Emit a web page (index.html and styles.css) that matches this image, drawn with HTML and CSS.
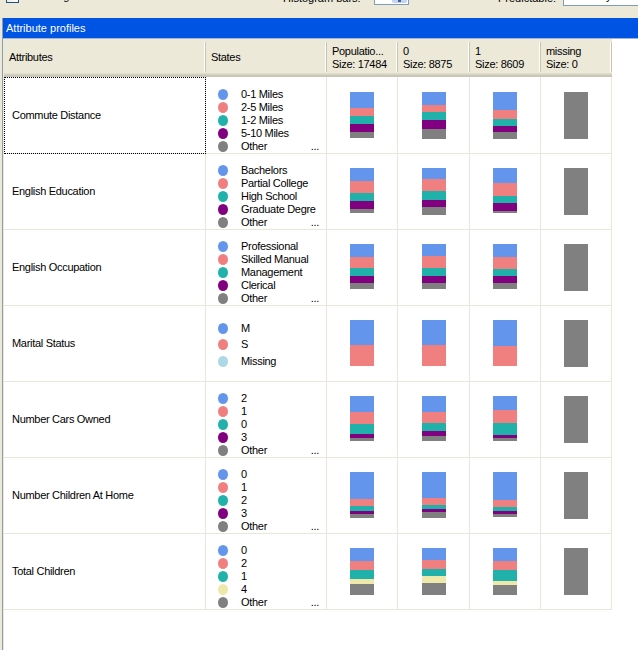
FILE: index.html
```html
<!DOCTYPE html>
<html>
<head>
<meta charset="utf-8">
<title>Attribute profiles</title>
<link rel="stylesheet" href="styles.css">
</head>
<body>
<div class="toolbar">
  <div class="toolbar-inner">
    <div class="tgroup">
      <span class="checkbox"></span>
      <span class="tlabel cb-label">Show legend</span>
    </div>
    <div class="tgroup">
      <span class="tlabel">Histogram bars:</span>
      <span class="combo"><span class="combo-btn"><span class="arrow"></span></span></span>
    </div>
    <div class="tgroup">
      <span class="tlabel">Predictable:</span>
      <span class="textbox">Bike Buyer</span>
    </div>
  </div>
</div>
<div class="panel">
  <div class="title">Attribute profiles</div>
  <div class="listview">
    <div class="thead">
      <div class="th">Attributes</div>
      <div class="th">States</div>
      <div class="th">Populatio...<br>Size: 17484</div>
      <div class="th">0<br>Size: 8875</div>
      <div class="th">1<br>Size: 8609</div>
      <div class="th">missing<br>Size: 0</div>
    </div>

    <div class="row first">
      <div class="cell attr focus">Commute Distance</div>
      <div class="cell states">
        <div class="st"><i class="dot blue"></i><span class="sl">0-1 Miles</span></div>
        <div class="st"><i class="dot pink"></i><span class="sl">2-5 Miles</span></div>
        <div class="st"><i class="dot teal"></i><span class="sl">1-2 Miles</span></div>
        <div class="st"><i class="dot purple"></i><span class="sl">5-10 Miles</span></div>
        <div class="st"><i class="dot grey"></i><span class="sl">Other</span><span class="more">...</span></div>
      </div>
      <div class="cell graph"><div class="bar"><i class="seg blue" style="height:16px"></i><i class="seg pink" style="height:8px"></i><i class="seg teal" style="height:8px"></i><i class="seg purple" style="height:8px"></i><i class="seg grey" style="height:6px"></i></div></div>
      <div class="cell graph"><div class="bar"><i class="seg blue" style="height:13px"></i><i class="seg pink" style="height:7px"></i><i class="seg teal" style="height:8px"></i><i class="seg purple" style="height:9px"></i><i class="seg grey" style="height:10px"></i></div></div>
      <div class="cell graph"><div class="bar"><i class="seg blue" style="height:18px"></i><i class="seg pink" style="height:9px"></i><i class="seg teal" style="height:7px"></i><i class="seg purple" style="height:6px"></i><i class="seg grey" style="height:7px"></i></div></div>
      <div class="cell graph"><div class="bar"><i class="seg grey" style="height:47px"></i></div></div>
    </div>

    <div class="row">
      <div class="cell attr">English Education</div>
      <div class="cell states">
        <div class="st"><i class="dot blue"></i><span class="sl">Bachelors</span></div>
        <div class="st"><i class="dot pink"></i><span class="sl">Partial College</span></div>
        <div class="st"><i class="dot teal"></i><span class="sl">High School</span></div>
        <div class="st"><i class="dot purple"></i><span class="sl">Graduate Degre</span></div>
        <div class="st"><i class="dot grey"></i><span class="sl">Other</span><span class="more">...</span></div>
      </div>
      <div class="cell graph"><div class="bar"><i class="seg blue" style="height:13px"></i><i class="seg pink" style="height:12px"></i><i class="seg teal" style="height:8px"></i><i class="seg purple" style="height:8px"></i><i class="seg grey" style="height:4px"></i></div></div>
      <div class="cell graph"><div class="bar"><i class="seg blue" style="height:11px"></i><i class="seg pink" style="height:12px"></i><i class="seg teal" style="height:9px"></i><i class="seg purple" style="height:7px"></i><i class="seg grey" style="height:8px"></i></div></div>
      <div class="cell graph"><div class="bar"><i class="seg blue" style="height:15px"></i><i class="seg pink" style="height:13px"></i><i class="seg teal" style="height:7px"></i><i class="seg purple" style="height:8px"></i><i class="seg grey" style="height:2px"></i></div></div>
      <div class="cell graph"><div class="bar"><i class="seg grey" style="height:47px"></i></div></div>
    </div>

    <div class="row">
      <div class="cell attr">English Occupation</div>
      <div class="cell states">
        <div class="st"><i class="dot blue"></i><span class="sl">Professional</span></div>
        <div class="st"><i class="dot pink"></i><span class="sl">Skilled Manual</span></div>
        <div class="st"><i class="dot teal"></i><span class="sl">Management</span></div>
        <div class="st"><i class="dot purple"></i><span class="sl">Clerical</span></div>
        <div class="st"><i class="dot grey"></i><span class="sl">Other</span><span class="more">...</span></div>
      </div>
      <div class="cell graph"><div class="bar"><i class="seg blue" style="height:13px"></i><i class="seg pink" style="height:11px"></i><i class="seg teal" style="height:8px"></i><i class="seg purple" style="height:7px"></i><i class="seg grey" style="height:6px"></i></div></div>
      <div class="cell graph"><div class="bar"><i class="seg blue" style="height:12px"></i><i class="seg pink" style="height:12px"></i><i class="seg teal" style="height:8px"></i><i class="seg purple" style="height:7px"></i><i class="seg grey" style="height:6px"></i></div></div>
      <div class="cell graph"><div class="bar"><i class="seg blue" style="height:13px"></i><i class="seg pink" style="height:12px"></i><i class="seg teal" style="height:7px"></i><i class="seg purple" style="height:7px"></i><i class="seg grey" style="height:6px"></i></div></div>
      <div class="cell graph"><div class="bar"><i class="seg grey" style="height:47px"></i></div></div>
    </div>

    <div class="row">
      <div class="cell attr">Marital Status</div>
      <div class="cell states three">
        <div class="st"><i class="dot blue"></i><span class="sl">M</span></div>
        <div class="st"><i class="dot pink"></i><span class="sl">S</span></div>
        <div class="st"><i class="dot lightblue"></i><span class="sl">Missing</span></div>
      </div>
      <div class="cell graph"><div class="bar"><i class="seg blue" style="height:25px"></i><i class="seg pink" style="height:21px"></i></div></div>
      <div class="cell graph"><div class="bar"><i class="seg blue" style="height:25px"></i><i class="seg pink" style="height:21px"></i></div></div>
      <div class="cell graph"><div class="bar"><i class="seg blue" style="height:26px"></i><i class="seg pink" style="height:20px"></i></div></div>
      <div class="cell graph"><div class="bar"><i class="seg grey" style="height:47px"></i></div></div>
    </div>

    <div class="row">
      <div class="cell attr">Number Cars Owned</div>
      <div class="cell states">
        <div class="st"><i class="dot blue"></i><span class="sl">2</span></div>
        <div class="st"><i class="dot pink"></i><span class="sl">1</span></div>
        <div class="st"><i class="dot teal"></i><span class="sl">0</span></div>
        <div class="st"><i class="dot purple"></i><span class="sl">3</span></div>
        <div class="st"><i class="dot grey"></i><span class="sl">Other</span><span class="more">...</span></div>
      </div>
      <div class="cell graph"><div class="bar"><i class="seg blue" style="height:16px"></i><i class="seg pink" style="height:12px"></i><i class="seg teal" style="height:10px"></i><i class="seg purple" style="height:4px"></i><i class="seg grey" style="height:3px"></i></div></div>
      <div class="cell graph"><div class="bar"><i class="seg blue" style="height:16px"></i><i class="seg pink" style="height:11px"></i><i class="seg teal" style="height:8px"></i><i class="seg purple" style="height:5px"></i><i class="seg grey" style="height:5px"></i></div></div>
      <div class="cell graph"><div class="bar"><i class="seg blue" style="height:14px"></i><i class="seg pink" style="height:13px"></i><i class="seg teal" style="height:12px"></i><i class="seg purple" style="height:3px"></i><i class="seg grey" style="height:3px"></i></div></div>
      <div class="cell graph"><div class="bar"><i class="seg grey" style="height:47px"></i></div></div>
    </div>

    <div class="row">
      <div class="cell attr">Number Children At Home</div>
      <div class="cell states">
        <div class="st"><i class="dot blue"></i><span class="sl">0</span></div>
        <div class="st"><i class="dot pink"></i><span class="sl">1</span></div>
        <div class="st"><i class="dot teal"></i><span class="sl">2</span></div>
        <div class="st"><i class="dot purple"></i><span class="sl">3</span></div>
        <div class="st"><i class="dot grey"></i><span class="sl">Other</span><span class="more">...</span></div>
      </div>
      <div class="cell graph"><div class="bar"><i class="seg blue" style="height:27px"></i><i class="seg pink" style="height:7px"></i><i class="seg teal" style="height:5px"></i><i class="seg purple" style="height:3px"></i><i class="seg grey" style="height:4px"></i></div></div>
      <div class="cell graph"><div class="bar"><i class="seg blue" style="height:26px"></i><i class="seg pink" style="height:7px"></i><i class="seg teal" style="height:4px"></i><i class="seg purple" style="height:3px"></i><i class="seg grey" style="height:6px"></i></div></div>
      <div class="cell graph"><div class="bar"><i class="seg blue" style="height:28px"></i><i class="seg pink" style="height:7px"></i><i class="seg teal" style="height:4px"></i><i class="seg purple" style="height:3px"></i><i class="seg grey" style="height:3px"></i></div></div>
      <div class="cell graph"><div class="bar"><i class="seg grey" style="height:47px"></i></div></div>
    </div>

    <div class="row">
      <div class="cell attr">Total Children</div>
      <div class="cell states">
        <div class="st"><i class="dot blue"></i><span class="sl">0</span></div>
        <div class="st"><i class="dot pink"></i><span class="sl">2</span></div>
        <div class="st"><i class="dot teal"></i><span class="sl">1</span></div>
        <div class="st"><i class="dot yellow"></i><span class="sl">4</span></div>
        <div class="st"><i class="dot grey"></i><span class="sl">Other</span><span class="more">...</span></div>
      </div>
      <div class="cell graph"><div class="bar"><i class="seg blue" style="height:13px"></i><i class="seg pink" style="height:9px"></i><i class="seg teal" style="height:9px"></i><i class="seg yellow" style="height:5px"></i><i class="seg grey" style="height:11px"></i></div></div>
      <div class="cell graph"><div class="bar"><i class="seg blue" style="height:12px"></i><i class="seg pink" style="height:9px"></i><i class="seg teal" style="height:7px"></i><i class="seg yellow" style="height:7px"></i><i class="seg grey" style="height:12px"></i></div></div>
      <div class="cell graph"><div class="bar"><i class="seg blue" style="height:13px"></i><i class="seg pink" style="height:9px"></i><i class="seg teal" style="height:11px"></i><i class="seg yellow" style="height:4px"></i><i class="seg grey" style="height:10px"></i></div></div>
      <div class="cell graph"><div class="bar"><i class="seg grey" style="height:47px"></i></div></div>
    </div>
  </div>
</div>
</body>
</html>
```

FILE: styles.css
```css
* { box-sizing: border-box; }

html, body {
  margin: 0;
  padding: 0;
}

body {
  width: 638px;
  height: 650px;
  overflow: hidden;
  background: #ECE9D8;
  font-family: "Liberation Sans", Arial, sans-serif;
  font-size: 11px;
  color: #000;
}

/* ---------- toolbar (top cut off) ---------- */
.toolbar {
  height: 18px;
  overflow: hidden;
}

.toolbar-inner {
  display: grid;
  grid-template-columns: 283px 215px 1fr;
  align-items: end;
  height: 30px;
  margin-top: -22px;
}

.tgroup {
  display: flex;
  align-items: flex-end;
  white-space: nowrap;
}

.checkbox {
  width: 13px;
  height: 13px;
  margin-left: 6px;
  margin-bottom: 5px;
  border: 1px solid #1C5180;
  background: linear-gradient(135deg, #DCDBD5, #fff);
}

.tlabel {
  line-height: 13px;
  margin-bottom: 3px;
}

.cb-label {
  margin-left: 5px;
  margin-bottom: 5px;
}

.combo {
  display: flex;
  justify-content: flex-end;
  width: 35px;
  height: 21px;
  margin-left: 13px;
  margin-bottom: 3px;
  padding: 1px;
  border: 1px solid #7F9DB9;
  background: #fff;
}

.combo-btn {
  display: flex;
  align-items: flex-end;
  justify-content: center;
  width: 15px;
  background: #C1D3FB;
  border-radius: 2px;
  padding-bottom: 1px;
}

.arrow {
  width: 3px;
  height: 3px;
  background: #4D6185;
}

.textbox {
  width: 130px;
  height: 20px;
  margin-left: 7px;
  margin-bottom: 2px;
  padding: 3px 0 0 4px;
  border: 1px solid #7F9DB9;
  background: #fff;
  line-height: 13px;
}

/* ---------- panel ---------- */
.panel {
  margin-left: 2px;
  height: 632px;
  border-left: 1px solid #8E9AAE;
  background: #fff;
}

.title {
  height: 21px;
  padding-left: 3px;
  background: #0054E3;
  border-bottom: 1px solid #A3B5D3;
  color: #fff;
  line-height: 20px;
}

.listview {
  border-left: 1px solid #ECE9D8;
  height: 611px;
  background: #fff;
  letter-spacing: -0.3px;
}

/* ---------- header ---------- */
.thead {
  display: grid;
  grid-template-columns: 202px 121px 71px 72px 71px 71px;
  width: 608px;
  height: 38px;
  background: linear-gradient(to bottom,
    #ECE9D8 0, #ECE9D8 34px,
    #E2DECD 34px, #E2DECD 35px,
    #D6D2C2 35px, #D6D2C2 36px,
    #CBC7B8 36px, #CBC7B8 38px);
}

.th {
  position: relative;
  display: flex;
  align-items: center;
  padding-left: 5px;
  padding-bottom: 1px;
  line-height: 13px;
  white-space: nowrap;
}

.th::after {
  content: "";
  position: absolute;
  top: 3px;
  bottom: 5px;
  right: 0;
  width: 1px;
  background: #C7C5B2;
  box-shadow: -1px 0 0 #fff;
}

/* ---------- rows ---------- */
.row {
  display: grid;
  grid-template-columns: 202px 121px 71px 72px 71px 71px;
  width: 608px;
  height: 76px;
}

.row.first {
  height: 77px;
}

.cell {
  border-right: 1px solid #EAE7DA;
  border-bottom: 1px solid #EAE7DA;
}

.attr {
  display: flex;
  align-items: center;
  padding-left: 8px;
  padding-bottom: 1px;
  white-space: nowrap;
}

.focus {
  outline: 1px dotted #000;
  outline-offset: -1px;
}

.states {
  display: flex;
  flex-direction: column;
  padding: 10px 7px 0 12px;
}

.first .states {
  padding-top: 11px;
}

.states.three {
  padding-top: 15.5px;
  gap: 3.5px;
}

.st {
  display: flex;
  align-items: center;
  height: 13px;
  line-height: 13px;
  white-space: nowrap;
}

.dot {
  flex: none;
  width: 10px;
  height: 11px;
  border-radius: 50%;
  margin-right: 13px;
}

.sl {
  flex: 1;
  overflow: hidden;
}

.more {
  flex: none;
}

.graph {
  display: flex;
  justify-content: center;
  align-items: flex-start;
  padding-top: 14px;
}

.first .graph {
  padding-top: 15px;
}

.bar {
  display: flex;
  flex-direction: column;
  width: 24px;
}

.seg {
  display: block;
  width: 100%;
}

/* colours */
.blue { background: #6495ED; }
.pink { background: #F08080; }
.teal { background: #20B2AA; }
.purple { background: #800080; }
.grey { background: #808080; }
.yellow { background: #EEE8AA; }
.lightblue { background: #ADD8E6; }
```
